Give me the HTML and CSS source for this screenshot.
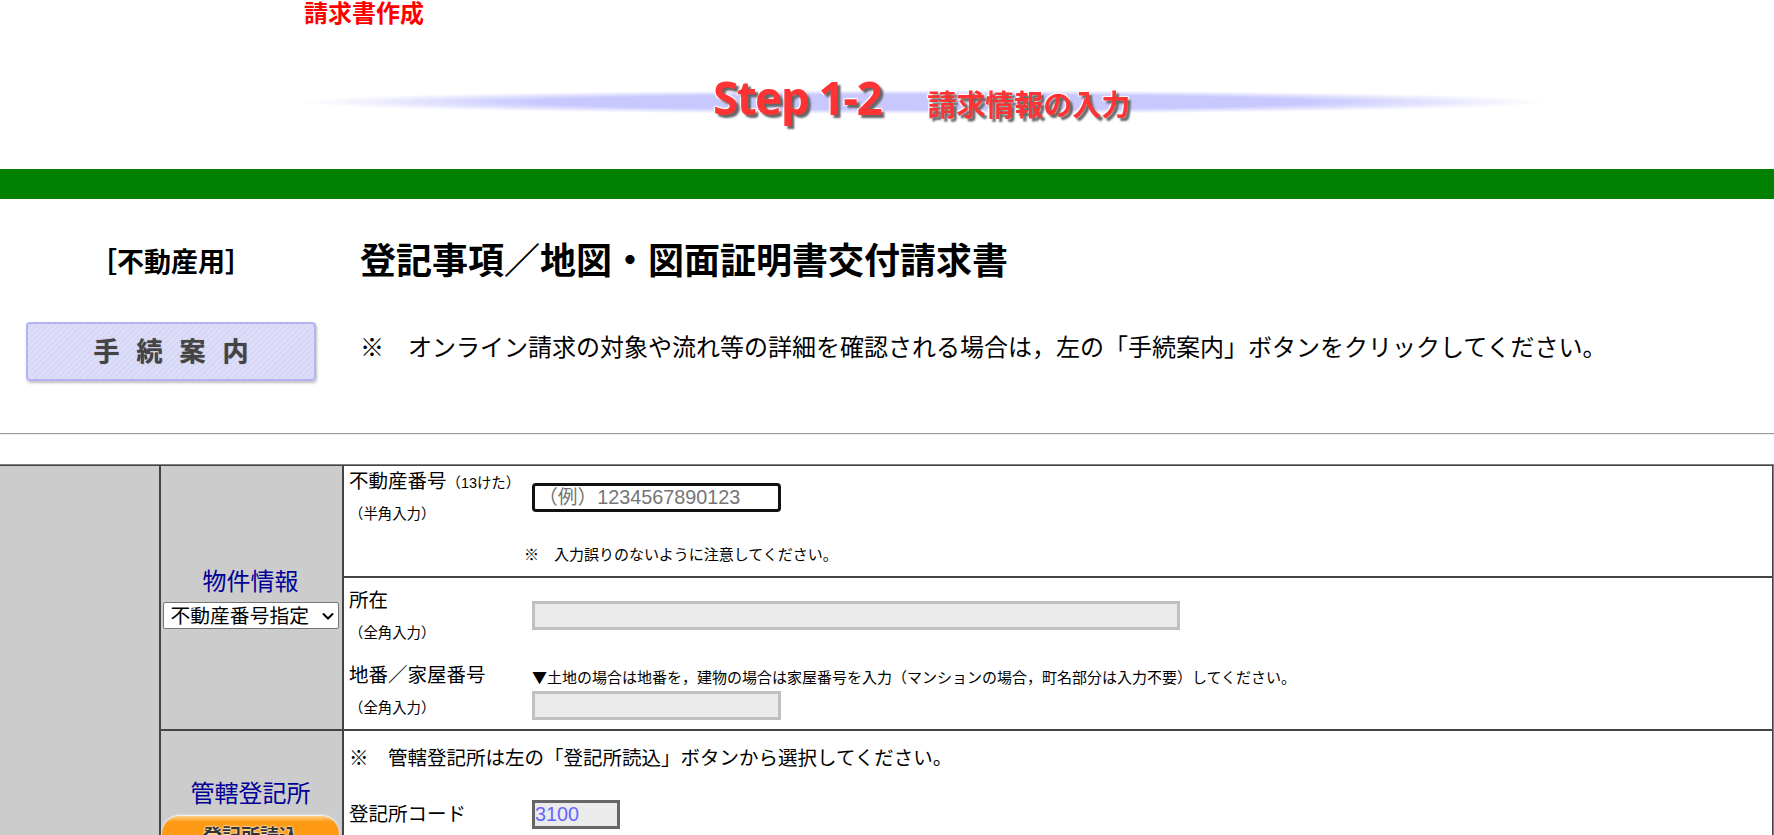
FILE: index.html
```html
<!DOCTYPE html>
<html lang="ja">
<head>
    <meta charset="utf-8">
    <title>請求書作成</title>
    <link rel="stylesheet" href="styles.css">
</head>
<body>
    <div class="page-title">請求書作成</div>

    <div class="step">
        <span class="step-no">Step 1-2</span>
        <span class="step-name">請求情報の入力</span>
    </div>

    <div class="green-bar"></div>

    <div class="intro">
        <div class="intro-left">
            <div class="kind">［不動産用］</div>
            <a class="guide-btn" href="#">手続案内</a>
        </div>
        <div class="intro-right">
            <h1>登記事項／地図・図面証明書交付請求書</h1>
            <p>※　オンライン請求の対象や流れ等の詳細を確認される場合は，左の「手続案内」ボタンをクリックしてください。</p>
        </div>
    </div>

    <hr class="rule">

    <table class="form-table">
        <tr>
            <td class="side" rowspan="3"></td>
            <td class="head" rowspan="2">
                <div class="head-title">物件情報</div>
                <select class="kind-select">
                    <option>不動産番号指定</option>
                </select>
            </td>
            <td class="body-cell number-cell">
                <div class="field">
                    <div class="label">
                        <div class="label-main">不動産番号<small>（13けた）</small></div>
                        <div class="label-sub">（半角入力）</div>
                    </div>
                    <input class="input input-number" type="text" placeholder="（例）1234567890123">
                </div>
                <div class="caution">※　入力誤りのないように注意してください。</div>
            </td>
        </tr>
        <tr>
            <td class="body-cell place-cell">
                <div class="field field-place">
                    <div class="label">
                        <div class="label-main">所在</div>
                        <div class="label-sub">（全角入力）</div>
                    </div>
                    <input class="input input-off input-place" type="text" disabled>
                </div>
                <div class="field field-lot">
                    <div class="label">
                        <div class="label-main">地番／家屋番号</div>
                        <div class="label-sub">（全角入力）</div>
                    </div>
                    <div>
                        <div class="hint">▼土地の場合は地番を，建物の場合は家屋番号を入力（マンションの場合，町名部分は入力不要）してください。</div>
                        <input class="input input-off input-lot" type="text" disabled>
                    </div>
                </div>
            </td>
        </tr>
        <tr>
            <td class="head head-office">
                <div class="head-title">管轄登記所</div>
                <a class="office-btn" href="#">登記所読込</a>
            </td>
            <td class="body-cell office-cell">
                <p class="office-note">※　管轄登記所は左の「登記所読込」ボタンから選択してください。</p>
                <div class="field field-code">
                    <div class="label-main">登記所コード</div>
                    <input class="input input-code" type="text" value="3100" readonly>
                </div>
            </td>
        </tr>
    </table>
</body>
</html>
```

FILE: styles.css
```css
html, body {
    height: 835px;
    overflow: hidden;
}

body {
    margin: 0;
    background-color: #ffffff;
    color: #000000;
    font-family: "Liberation Sans", "Noto Sans CJK JP", sans-serif;
    font-size: 19.5px;
}

.page-title {
    height: 27px;
    padding-left: 304px;
    color: #ff0000;
    font-size: 24px;
    font-weight: bold;
    line-height: 27px;
}

.step {
    display: flex;
    align-items: center;
    width: 1248px;
    height: 70px;
    margin: 40px 0 32px 300px;
    background: radial-gradient(closest-side, #c8c8ff 0, #c8c8ff 62%, rgba(200, 200, 255, 0) 100%) center / 100% 24px no-repeat;
    color: #ff3333;
    font-weight: bold;
    text-shadow: 3px 3px 2px #666666, -1px -1px 1px #ffffff, 1px -1px 1px #ffffff, -1px 1px 1px #ffffff;
    filter: blur(0.4px);
}

.step-no {
    margin-left: 413px;
    margin-top: -10px;
    font-family: "Open Sans", sans-serif;
    font-size: 46px;
    font-weight: 700;
    letter-spacing: -1.6px;
    line-height: 50px;
}

.step-name {
    margin-left: 46px;
    margin-top: 1px;
    font-size: 29px;
}

.green-bar {
    height: 30px;
    background-color: #008000;
}

.intro {
    display: flex;
    height: 234px;
}

.intro-left {
    width: 342px;
    padding-top: 47px;
    box-sizing: border-box;
}

.kind {
    text-align: center;
    font-size: 27px;
    font-weight: bold;
    line-height: 34px;
}

.guide-btn {
    display: block;
    width: 290px;
    height: 59px;
    margin: 42px 0 0 26px;
    padding-left: 17px;
    box-sizing: border-box;
    border: 2px solid #b4b4f4;
    border-radius: 4px;
    background: repeating-linear-gradient(135deg, #dedef8 0, #dedef8 2px, #d6d6f6 2px, #d6d6f6 4px);
    box-shadow: 1px 2px 3px rgba(0, 0, 0, 0.25);
    color: #444444;
    font-size: 26px;
    font-weight: bold;
    letter-spacing: 17px;
    line-height: 56px;
    text-align: center;
    text-decoration: none;
    text-shadow: 0 0 1px #666666;
}

.intro-right {
    padding: 41px 0 0 18px;
}

.intro-right h1 {
    margin: 0;
    font-size: 36px;
    line-height: 44px;
}

.intro-right p {
    margin: 47px 0 0;
    font-size: 24px;
    line-height: 34px;
}

.rule {
    height: 0;
    margin: 0;
    border: 0;
    border-top: 1px solid #9a9a9a;
    border-bottom: 1px solid #eeeeee;
}

.form-table {
    width: 100%;
    margin-top: 29px;
    border-top: 1px solid #808080;
    border-right: 1px solid #808080;
    border-spacing: 0;
    table-layout: fixed;
}

.form-table td {
    padding: 0;
    border: 1px solid #444444;
}

.form-table .side {
    width: 159px;
    border-left: 0;
    background-color: #cccccc;
}

.form-table .head {
    width: 179px;
    padding-right: 2px;
    background-color: #cccccc;
    text-align: center;
    vertical-align: middle;
}

.head-title {
    color: #000099;
    font-size: 24px;
    line-height: 32px;
}

.kind-select {
    width: 176px;
    height: 27px;
    margin-top: 4px;
    padding: 0 0 0 7px;
    border: 1px solid #767676;
    border-radius: 2px;
    appearance: none;
    background: #ffffff url("data:image/svg+xml,%3Csvg xmlns='http://www.w3.org/2000/svg' width='12' height='8'%3E%3Cpath d='M1 1.5l5 5 5-5' fill='none' stroke='%23000' stroke-width='2'/%3E%3C/svg%3E") right 4px center no-repeat;
    font-family: inherit;
    font-size: 19.8px;
}

.form-table .head-office {
    vertical-align: top;
    padding-top: 47px;
}

.office-btn {
    display: block;
    height: 44px;
    margin: 6px 1px 0;
    padding-top: 6px;
    border-radius: 18px 18px 0 0;
    background: linear-gradient(#ffd08a 0, #ff9a14 12%, #ff9a14 100%);
    box-shadow: 0 -1px 2px #ffffff;
    color: #333333;
    font-size: 19px;
    font-weight: bold;
    line-height: 30px;
    text-decoration: none;
    text-shadow: 0 0 2px #ffffff, 0 0 2px #ffffff;
}

.form-table .body-cell {
    padding-left: 5px;
    vertical-align: top;
}

.form-table .number-cell {
    height: 110px;
}

.form-table .place-cell {
    height: 151px;
}

.field {
    display: grid;
    grid-template-columns: 183px 1fr;
}

.number-cell .field {
    padding-top: 2px;
}

.label-main {
    line-height: 27px;
}

.label-main small {
    font-size: 14.4px;
}

.label-sub {
    margin-top: 5px;
    font-size: 14.4px;
    line-height: 24px;
}

.input {
    display: block;
    box-sizing: border-box;
    height: 29px;
    margin: 0;
    padding: 0;
    font-family: inherit;
    font-size: 19.8px;
}

.input-number {
    width: 249px;
    margin-top: 15px;
    padding-left: 3px;
    border: 3px solid #111111;
    border-radius: 4px;
    outline: 0;
}

.input-number::placeholder {
    color: #757575;
}

.caution {
    margin: 19px 0 0 175px;
    font-size: 15px;
    line-height: 20px;
}

.input-off {
    border: 3px solid #c0c0c0;
    background-color: #ebebeb;
}

.input-place {
    width: 648px;
    margin-top: 14px;
}

.input-lot {
    width: 249px;
    margin-top: 4px;
}

.field-place {
    padding-top: 9px;
}

.field-place .label-sub {
    margin-top: 7px;
}

.field-lot {
    margin-top: 17px;
}

.field-lot .label-sub {
    margin-top: 7px;
}

.hint {
    margin-top: 5px;
    font-family: "Noto Sans CJK JP", sans-serif;
    font-size: 15px;
    line-height: 20px;
}

.office-note {
    margin: 14px 0 0;
    line-height: 26px;
}

.field-code {
    align-items: center;
    margin-top: 29px;
}

.input-code {
    width: 88px;
    border: 3px solid #666666;
    background-color: #ebebeb;
    color: #6666ff;
    outline: 0;
}
```
